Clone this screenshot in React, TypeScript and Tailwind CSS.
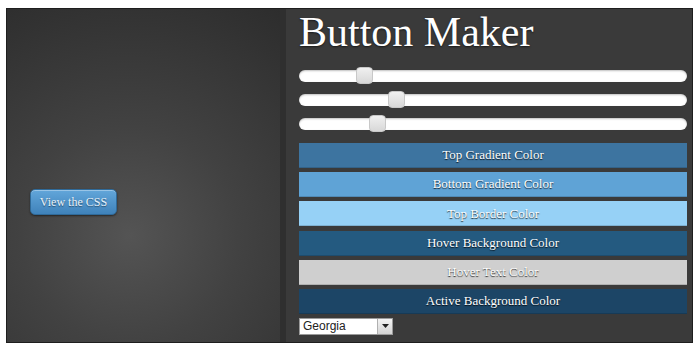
import React from "react";

const serif = { fontFamily: '"Liberation Serif", Georgia, serif' };

const bars = [
  { label: "Top Gradient Color", cls: "bg-[#3d74a0]" },
  { label: "Bottom Gradient Color", cls: "bg-[#5fa3d6]" },
  { label: "Top Border Color", cls: "bg-[#96d1f6]" },
  { label: "Hover Background Color", cls: "bg-[#245a80]" },
  { label: "Hover Text Color", cls: "bg-[#cfcfcf]" },
  { label: "Active Background Color", cls: "bg-[#1c4566]" },
];

const thumbs = [57, 89, 70];

function Slider({ left }: { left: number }) {
  return (
    <div className="h-[24px] flex items-center">
      <div className="relative w-full h-[12px] rounded-full bg-white shadow-[inset_0_1px_2px_rgba(0,0,0,0.25)]">
        <div
          className="absolute top-[-3px] w-[17px] h-[17px] rounded-[4px] bg-gradient-to-b from-[#f0f0f0] to-[#d8d8d8] border border-[#c8c8c8]"
          style={{ left }}
        />
      </div>
    </div>
  );
}

export default function App() {
  return (
    <div className="w-[700px] h-[351px] bg-white pt-[8px] pl-[6px]">
      <div className="w-[687px] h-[335px] border border-[#1e1e1e] flex bg-[#3a3a3a]">
        <div className="w-[273px] h-full bg-[radial-gradient(circle_at_45%_68%,#545454_0%,#424242_40%,#323232_85%,#2d2d2d_100%)] pl-[23px] pt-[180px]">
          <div
            className="w-[87px] h-[26px] rounded-[5px] border border-[#2f6a99] bg-gradient-to-b from-[#62a6da] to-[#3f82ba] shadow-[inset_0_1px_0_rgba(255,255,255,0.35),0_1px_2px_rgba(0,0,0,0.5)] flex items-center justify-center text-[12px] text-[#e8f2fa] [text-shadow:0_1px_1px_rgba(0,0,0,0.45)]"
            style={serif}
          >
            View the CSS
          </div>
        </div>
        <div className="w-[6px] h-full bg-[#2f2f2f]" />
        <div className="flex-1 h-full pl-[13px] pr-[5px] flex flex-col">
          <div
            className="text-[42px] leading-[46px] text-white [text-shadow:0_1px_2px_rgba(0,0,0,0.6)]"
            style={serif}
          >
            Button Maker
          </div>
          <div className="mt-[9px] flex flex-col">
            {thumbs.map((t, i) => (
              <Slider key={i} left={t} />
            ))}
          </div>
          <div className="mt-[7px] flex flex-col gap-[4.2px]">
            {bars.map((b) => (
              <div
                key={b.label}
                className={`h-[25px] ${b.cls} border-b border-[rgba(0,0,0,0.15)] flex items-center justify-center text-[13px] text-white [text-shadow:0_1px_1px_rgba(0,0,0,0.8)]`}
                style={serif}
              >
                {b.label}
              </div>
            ))}
          </div>
          <div className="mt-[4px] w-[94px] h-[17px] bg-white border border-[#9a9a9a] flex items-center">
            <span
              className="flex-1 pl-[3px] text-[12px] leading-none text-[#222]"
              style={{ fontFamily: '"Liberation Sans", Arial, sans-serif' }}
            >
              Georgia
            </span>
            <div className="w-[15px] h-[15px] bg-gradient-to-b from-[#f4f4f4] to-[#d4d4d4] border-l border-[#b0b0b0] flex items-center justify-center">
              <svg width="7" height="4" viewBox="0 0 7 4">
                <path d="M0 0 L7 0 L3.5 4 Z" fill="#222" />
              </svg>
            </div>
          </div>
        </div>
      </div>
    </div>
  );
}
